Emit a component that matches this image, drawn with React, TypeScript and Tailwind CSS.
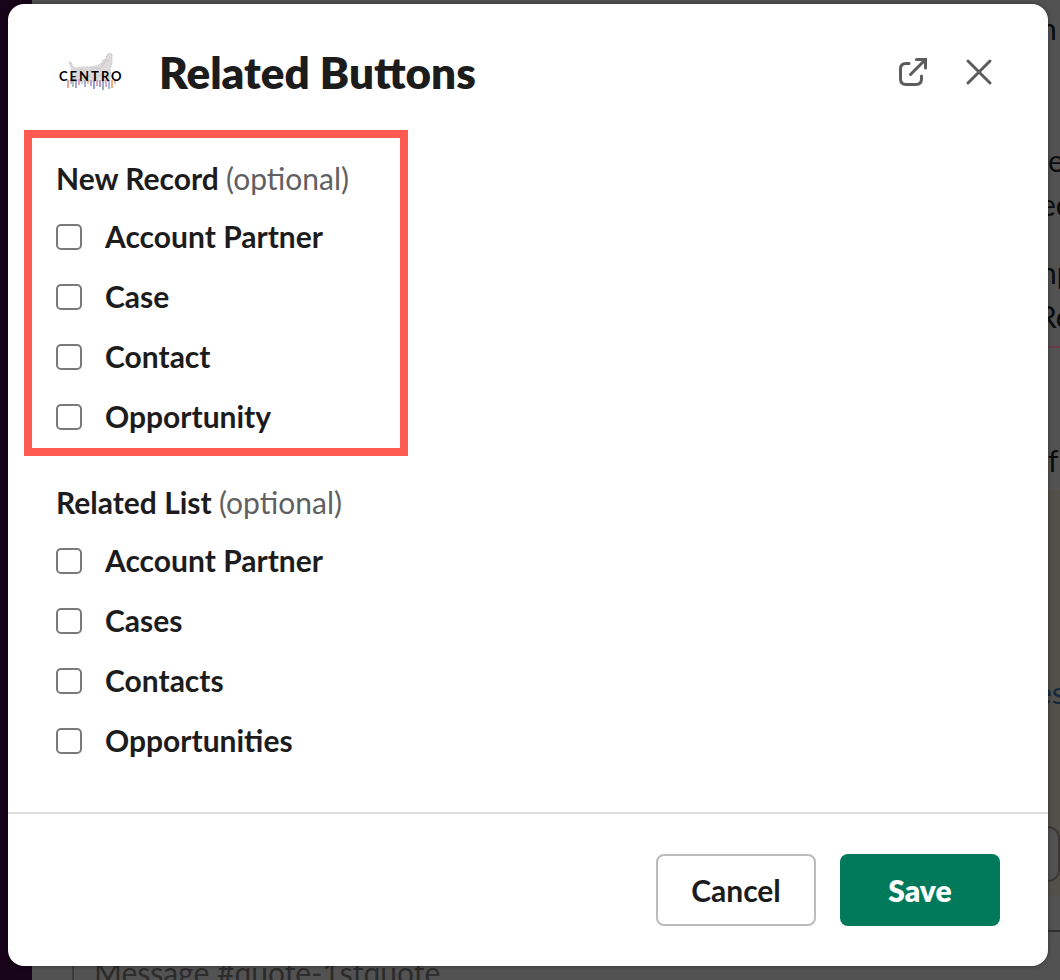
import { useState } from 'react'

type Group = { id: string; title: string; options: string[]; highlighted?: boolean }

const groups: Group[] = [
  {
    id: 'new-record',
    title: 'New Record',
    options: ['Account Partner', 'Case', 'Contact', 'Opportunity'],
    highlighted: true,
  },
  {
    id: 'related-list',
    title: 'Related List',
    options: ['Account Partner', 'Cases', 'Contacts', 'Opportunities'],
  },
]

// [x, top, height, colour] of the paint drips under the dog
const drips: [number, number, number, string][] = [
  [11, 34, 8, '#e8a79a'],
  [14, 33, 5, '#c3b4dc'],
  [16, 34, 7, '#a8c3b0'],
  [19, 34, 8, '#9aa9d9'],
  [22, 33, 6, '#e5a4bd'],
  [25, 34, 4, '#c9c9d2'],
  [28, 34, 7, '#a5aed0'],
  [31, 34, 4, '#e6c08f'],
  [34, 34, 6, '#b9a2d6'],
  [37, 34, 9, '#8ea3dc'],
  [40, 34, 6, '#dfa6ad'],
  [43, 34, 7, '#b79ac6'],
  [46, 34, 10, '#93afc8'],
  [49, 34, 7, '#e0a8c5'],
  [52, 34, 9, '#a8b8d8'],
  [55, 34, 8, '#e9b27c'],
  [58, 34, 4, '#d5bfd0'],
]

function CentroLogo() {
  return (
    <svg viewBox="0 0 72 52" className="h-[52px] w-[72px] shrink-0" role="img" aria-label="Centro">
      <path
        d="M13 16l2 0 2 5 3 1 6-1 8 0 6-1 5-2 2-4 3-1 1-4 3-2 2 1 0 9-2 6 1 7-3 6H15l2-8-2-7z"
        fill="#dddbdc"
        stroke="#c8c5c7"
        strokeWidth="1"
        strokeDasharray="2 1"
      />
      <path
        d="M20 25l6-2 6 3 6-4 6 1 5-7M46 20l4-6 3 1M17 33l5-4 5 4 6-4 6 4 5-4 6 3"
        fill="none"
        stroke="#cbc7ca"
        strokeWidth="1"
      />
      {drips.map(([x, y, h, fill]) => (
        <rect key={x} x={x} y={y} width="2" height={h} fill={fill} />
      ))}
      <text x="3" y="35" className="fill-black font-['Lato',sans-serif] text-[13px] font-bold tracking-[2px]">
        CENTRO
      </text>
    </svg>
  )
}

function OpenIcon() {
  return (
    <svg viewBox="0 0 32 32" className="size-8" fill="none" stroke="#5c5c5c" strokeWidth="3" strokeLinecap="round" strokeLinejoin="round" aria-hidden="true">
      <path d="M12 7.500H9Q3.500 7.500 3.500 13v10q0 5.500 5.500 5.500h10q5.500 0 5.500-5.500v-3" />
      <path d="M13.500 18.500L28 4" />
      <path d="M19.500 3.500h9V12" strokeLinejoin="miter" />
    </svg>
  )
}

function CloseIcon() {
  return (
    <svg viewBox="0 0 32 32" className="size-8" fill="none" stroke="#5c5c5c" strokeWidth="3" strokeLinecap="round" aria-hidden="true">
      <path d="M5 5l22 22M27 5L5 27" />
    </svg>
  )
}

// The dimmed channel view behind the dialog
function Backdrop() {
  return (
    <div className="absolute inset-0 flex overflow-hidden bg-[#525252] text-[30px] leading-[44px] text-[#0c0c0c]" aria-hidden="true">
      <div className="w-8 bg-[#180419]" />
      <div className="flex flex-1 flex-col justify-end pl-10">
        <div className="h-[38px] border-l-2 border-[#3a3a3a] pl-5 leading-[60px] text-[#2b2b2b]">
          Message #quote-1stquote
        </div>
      </div>
      <div className="flex w-6 flex-col overflow-hidden whitespace-nowrap pt-1.5">
        <p className="pl-1">n</p>
        <p className="mt-[88px] pl-3">e</p>
        <p className="pl-1">ec</p>
        <p className="mt-6 pl-1">np</p>
        <p className="pl-0.5">Re</p>
        <div className="mt-2 h-0.5 shrink-0 bg-[#6b3a44]" />
        <p className="mt-[90px] pl-3">f</p>
        <div className="mt-2 h-[406px] shrink-0 bg-[#525049] pt-[180px]">
          <p className="text-[#14293f]">es</p>
          <div className="mt-28 h-14 rounded-r-xl border-2 border-[#393835] bg-[#525252]" />
        </div>
        <div className="mt-[34px] h-0.5 shrink-0 bg-[#2f2f2f]" />
      </div>
    </div>
  )
}

function OptionGroup({ group }: { group: Group }) {
  const [checked, setChecked] = useState<string[]>([])

  const toggle = (option: string) =>
    setChecked((prev) => (prev.includes(option) ? prev.filter((o) => o !== option) : [...prev, option]))

  return (
    <fieldset
      className={`w-[368px] max-w-full px-6 pt-[18px] pb-px ${group.highlighted ? 'outline-8 outline-[#ff5a4f]' : ''}`}
    >
      <legend className="float-left mb-[7px] w-full text-[30px] leading-[44px] font-bold">
        {group.title} <span className="font-normal text-[#616061]">(optional)</span>
      </legend>
      <div className="clear-both flex flex-col">
        {group.options.map((option) => {
          const id = `${group.id}-${option.toLowerCase().replace(' ', '-')}`
          return (
            <div key={id} className="flex h-[60px] items-center gap-[23px]">
              <input
                id={id}
                type="checkbox"
                checked={checked.includes(option)}
                onChange={() => toggle(option)}
                className="size-[26px] shrink-0 appearance-none rounded-[5px] border-2 border-[#7a7a7a] bg-white checked:border-[#1264a3] checked:bg-[#1264a3]"
              />
              <label htmlFor={id} className="pb-0.5 text-[30px] leading-[44px] font-bold">
                {option}
              </label>
            </div>
          )
        })}
      </div>
    </fieldset>
  )
}

export default function App() {
  return (
    <div className="relative flex min-h-screen pt-1 pr-3 pb-3.5 pl-2 font-['Lato',sans-serif] text-[#1d1c1d]">
      <Backdrop />
      <div
        role="dialog"
        aria-labelledby="dialog-title"
        className="relative flex flex-1 flex-col rounded-2xl bg-white shadow-[0_0_4px_rgba(0,0,0,0.4)]"
      >
        <header className="flex items-center pt-9 pr-[53px] pl-12">
          <CentroLogo />
          <h1 id="dialog-title" className="ml-[31px] flex-1 text-[44px] leading-[64px] font-extrabold">
            Related Buttons
          </h1>
          <div className="flex gap-[34px]">
            <button type="button" aria-label="Open in new window">
              <OpenIcon />
            </button>
            <button type="button" aria-label="Close">
              <CloseIcon />
            </button>
          </div>
        </header>

        <div className="flex flex-1 flex-col gap-3.5 px-6 pt-[34px]">
          {groups.map((group) => (
            <OptionGroup key={group.id} group={group} />
          ))}
        </div>

        <footer className="flex justify-end gap-6 border-t-2 border-[#dddddd] px-12 py-10">
          <button type="button" className="h-[72px] w-40 rounded-lg border-2 border-[#bbbbbb] bg-white text-[30px] font-bold">
            Cancel
          </button>
          <button type="button" className="h-[72px] w-40 rounded-lg bg-[#007a5a] text-[30px] font-extrabold text-white">
            Save
          </button>
        </footer>
      </div>
    </div>
  )
}
